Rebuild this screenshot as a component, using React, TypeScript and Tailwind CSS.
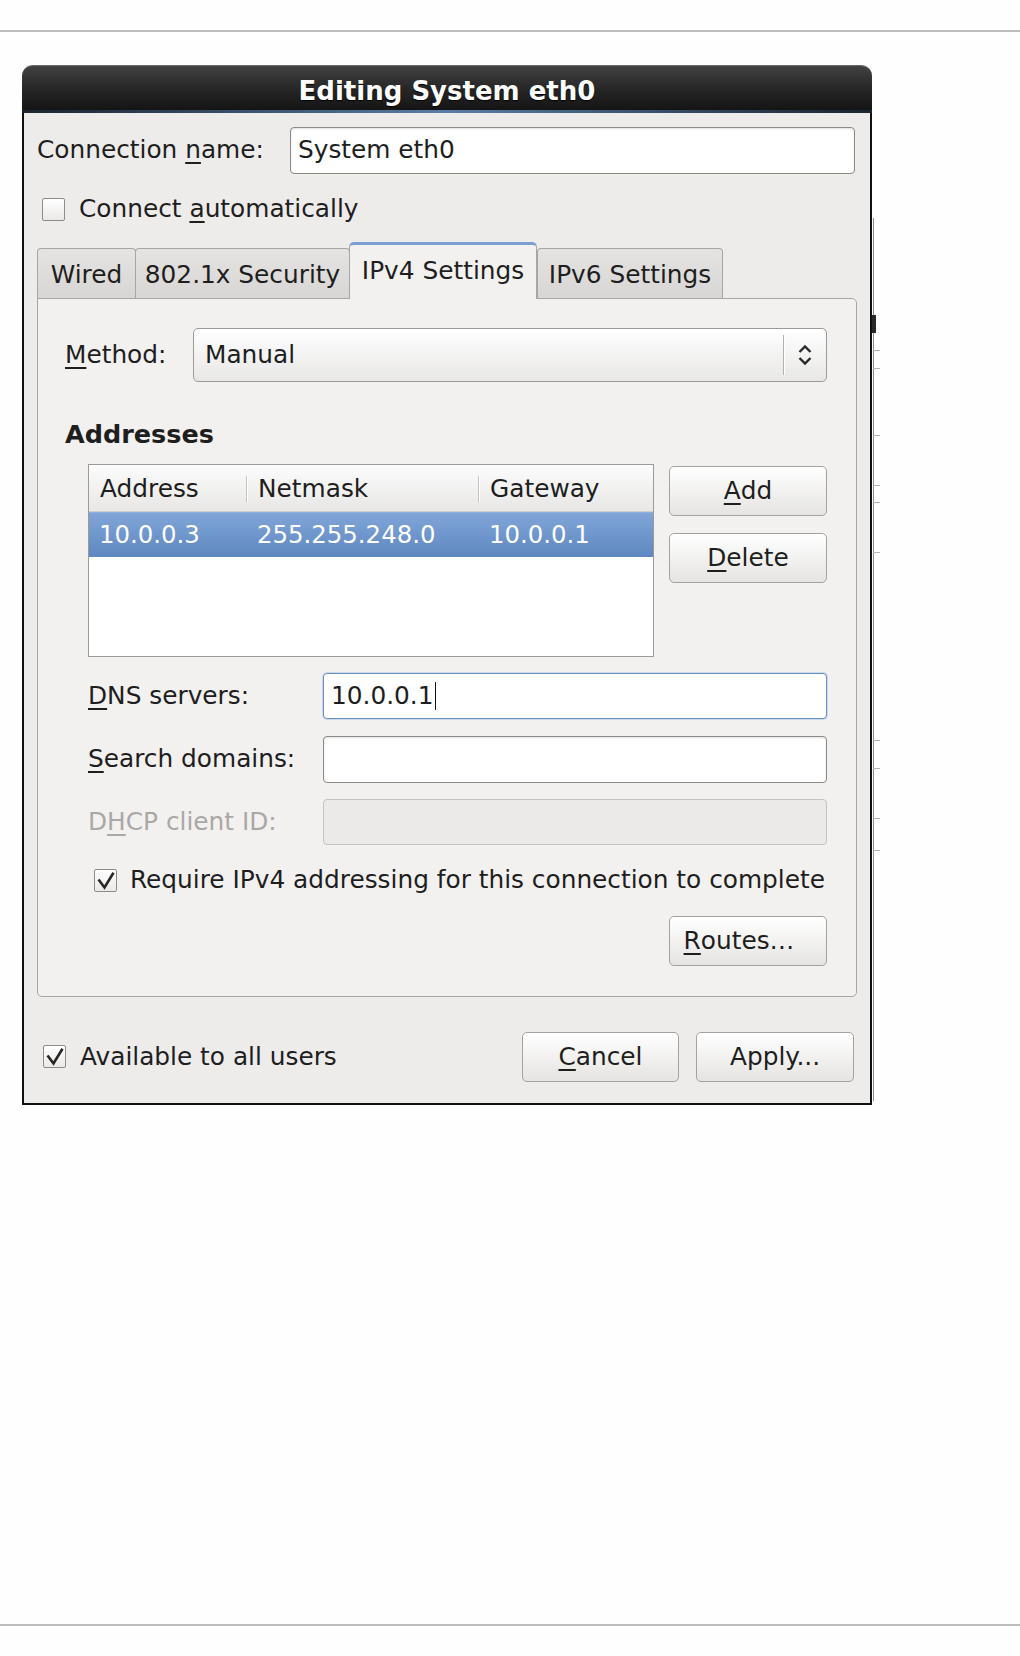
import React from "react";

function Check({ checked }: { checked?: boolean }) {
  return (
    <span className="flex h-[23px] w-[23px] shrink-0 items-center justify-center rounded-[2px] border border-[#8e8b88] bg-linear-to-b from-white to-[#ebe9e7]">
      {checked && (
        <svg width="21" height="21" viewBox="0 0 21 21">
          <path d="M3.5 9.5 L9.5 17.5 L18.5 2.8" fill="none" stroke="#262626" strokeWidth="2.6" />
        </svg>
      )}
    </span>
  );
}

function U({ children }: { children: React.ReactNode }) {
  return <span className="underline decoration-[1.5px] underline-offset-[4px]">{children}</span>;
}

function Btn({ children, w = "w-[158px]", extra = "" }: { children: React.ReactNode; w?: string; extra?: string }) {
  return (
    <div
      className={`${w} ${extra} flex h-[50px] shrink-0 items-center justify-center rounded-[5px] border border-[#a4a19e] bg-linear-to-b from-white to-[#e5e4e2] leading-none text-[#1e1e1e] shadow-[inset_0_1px_0_#ffffff]`}
    >
      {children}
    </div>
  );
}

function Tab({ label, active, w }: { label: string; active?: boolean; w: string }) {
  if (active) {
    return (
      <div
        className={`${w} relative z-10 -mb-px flex h-[57px] items-center justify-center rounded-t-[5px] border border-b-0 border-[#a8a6a3] border-t-[3px] border-t-[#7b9fd0] bg-[#f2f1f0] pb-[1px] leading-none`}
      >
        {label}
      </div>
    );
  }
  return (
    <div
      className={`${w} -mr-px flex h-[50px] items-center justify-center rounded-t-[4px] border border-b-0 border-[#a8a6a3] bg-linear-to-b from-[#e5e4e2] to-[#d7d6d4] pt-[3px] leading-none`}
    >
      {label}
    </div>
  );
}

export default function App() {
  const ticks = [285, 303, 370, 420, 437, 487, 675, 703, 753, 785];
  return (
    <div className="flex h-[1656px] w-[1020px] flex-col bg-[#fefefe] font-['DejaVu_Sans','Liberation_Sans',sans-serif] text-[24.8px] text-[#1e1e1e]">
      <div className="mt-[30px] h-[2px] w-full bg-[#bcbcbc]" />

      <div className="mt-[33px] ml-[22px] flex">
        {/* dialog */}
        <div className="flex w-[850px] flex-col">
          {/* title bar */}
          <div className="flex h-[48px] flex-col rounded-t-[11px] border-t border-[#6a6a6a] bg-linear-to-b from-[#424242] via-[#262626] to-[#121212]">
            <div className="flex flex-1 items-center justify-center pt-[5px]">
              <span className="text-[26px] font-bold leading-none text-white [text-shadow:0_1px_1px_#000]">
                Editing System eth0
              </span>
            </div>
            <div className="h-[3px] bg-linear-to-r from-[#1c2430] via-[#5a7ea8] to-[#1c2430]" />
          </div>

          {/* body */}
          <div className="flex flex-col border-x-2 border-b-2 border-[#101010] bg-[#edeceb] pb-[21px]">
            {/* connection name */}
            <div className="flex items-center pt-[14px] pr-[15px] pl-[13px]">
              <div className="w-[253px] leading-none">
                Connection <U>n</U>ame:
              </div>
              <div className="flex h-[47px] flex-1 items-center rounded-[4px] border border-[#8d8a86] bg-white pl-[7px] leading-none shadow-[inset_0_1px_2px_rgba(0,0,0,0.12)]">
                System eth0
              </div>
            </div>

            {/* connect automatically */}
            <div className="mt-[20px] flex h-[31px] items-center gap-[14px] pl-[18px] leading-none">
              <Check />
              <span>
                Connect <U>a</U>utomatically
              </span>
            </div>

            {/* tabs */}
            <div className="mt-[17px] flex items-end pl-[13px]">
              <Tab label="Wired" w="w-[99px]" />
              <Tab label="802.1x Security" w="w-[215px]" />
              <Tab label="IPv4 Settings" w="w-[188px]" active />
              <Tab label="IPv6 Settings" w="w-[186px]" />
            </div>

            {/* panel */}
            <div className="mx-[13px] flex flex-col rounded-[5px] rounded-tl-none border border-[#a8a6a3] bg-[#f2f1f0] pt-[29px] pr-[29px] pb-[30px] pl-[27px]">
              {/* method */}
              <div className="flex items-center">
                <div className="w-[128px] leading-none">
                  <U>M</U>ethod:
                </div>
                <div className="flex h-[54px] flex-1 items-center rounded-[5px] border border-[#9d9a97] bg-linear-to-b from-white to-[#e8e7e6]">
                  <span className="flex-1 pl-[11px] leading-none">Manual</span>
                  <div className="h-[40px] w-px bg-[#b3b1ae] shadow-[1px_0_0_#ffffff]" />
                  <div className="flex w-[42px] items-center justify-center">
                    <svg width="16" height="24" viewBox="0 0 16 24">
                      <path d="M2.5 9 L8 3.5 L13.5 9" fill="none" stroke="#2a2a2a" strokeWidth="2.4" />
                      <path d="M2.5 15 L8 20.5 L13.5 15" fill="none" stroke="#2a2a2a" strokeWidth="2.4" />
                    </svg>
                  </div>
                </div>
              </div>

              {/* addresses heading */}
              <div className="mt-[38px] flex h-[30px] items-center text-[25.5px] font-bold leading-none">
                Addresses
              </div>

              {/* table + buttons */}
              <div className="mt-[14px] ml-[23px] flex">
                <div className="flex h-[193px] w-[566px] flex-col border border-[#9c9a97] bg-white">
                  <div className="flex h-[47px] border-b border-[#cfcdca] bg-linear-to-b from-[#fcfcfc] to-[#e8e7e6] pt-[2px] leading-none">
                    <div className="flex w-[157px] items-center pl-[11px]">Address</div>
                    <div className="my-[9px] w-px bg-[#c6c4c1] shadow-[1px_0_0_#ffffff]" />
                    <div className="flex w-[231px] items-center pl-[11px]">Netmask</div>
                    <div className="my-[9px] w-px bg-[#c6c4c1] shadow-[1px_0_0_#ffffff]" />
                    <div className="flex flex-1 items-center pl-[11px]">Gateway</div>
                  </div>
                  <div className="flex h-[45px] items-center border-t border-[#8fb0dd] bg-linear-to-b from-[#80a5d8] to-[#5f88c0] text-[24.4px] leading-none text-white">
                    <div className="w-[157px] pl-[10px]">10.0.0.3</div>
                    <div className="w-[232px] pl-[11px]">255.255.248.0</div>
                    <div className="flex-1 pl-[11px]">10.0.0.1</div>
                  </div>
                </div>
                <div className="ml-[15px] flex flex-col gap-[17px] pt-[2px]">
                  <Btn>
                    <U>A</U>dd
                  </Btn>
                  <Btn>
                    <U>D</U>elete
                  </Btn>
                </div>
              </div>

              {/* dns */}
              <div className="mt-[16px] ml-[23px] flex items-center">
                <div className="w-[235px] leading-none">
                  <U>D</U>NS servers:
                </div>
                <div className="flex h-[46px] flex-1 items-center rounded-[4px] border border-[#6a8fc4] bg-white pl-[7px] leading-none shadow-[0_0_0_1px_rgba(140,170,215,0.35)]">
                  10.0.0.1
                  <span className="ml-[1px] h-[28px] w-px bg-[#111]" />
                </div>
              </div>

              {/* search */}
              <div className="mt-[17px] ml-[23px] flex items-center">
                <div className="w-[235px] leading-none">
                  <U>S</U>earch domains:
                </div>
                <div className="h-[47px] flex-1 rounded-[4px] border border-[#8d8a86] bg-white shadow-[inset_0_1px_2px_rgba(0,0,0,0.12)]" />
              </div>

              {/* dhcp */}
              <div className="mt-[16px] ml-[23px] flex items-center">
                <div className="w-[235px] leading-none text-[#a9a8a6]">
                  D<U>H</U>CP client ID:
                </div>
                <div className="h-[46px] flex-1 rounded-[4px] border border-[#c5c3c0] bg-[#ebeae9]" />
              </div>

              {/* require */}
              <div className="mt-[19px] ml-[29px] flex h-[32px] items-center gap-[13px] leading-none">
                <Check checked />
                <span>Require IPv4 addressing for this connection to complete</span>
              </div>

              {/* routes */}
              <div className="mt-[20px] flex justify-end">
                <Btn extra="pr-[18px]">
                  <U>R</U>outes…
                </Btn>
              </div>
            </div>

            {/* bottom row */}
            <div className="mt-[35px] flex items-center pr-[16px] pl-[19px]">
              <div className="flex items-center gap-[14px] leading-none">
                <Check checked />
                <span>Available to all users</span>
              </div>
              <div className="ml-auto flex gap-[17px]">
                <Btn w="w-[157px]">
                  <U>C</U>ancel
                </Btn>
                <Btn>Apply...</Btn>
              </div>
            </div>
          </div>
        </div>

        {/* window behind, peeking at the right edge */}
        <div className="relative w-[10px]">
          <div className="absolute top-[153px] bottom-[4px] left-[1px] w-px bg-[#8a8a8a]" />
          <div className="absolute top-[250px] left-0 h-[18px] w-[4px] bg-[#2a2a2a]" />
          {ticks.map((t) => (
            <div key={t} className="absolute left-[1px] h-px w-[7px] bg-[#b5b5b5]" style={{ top: t }} />
          ))}
        </div>
      </div>

      <div className="flex-1" />
      <div className="mb-[30px] h-[2px] w-full bg-[#bcbcbc]" />
    </div>
  );
}
